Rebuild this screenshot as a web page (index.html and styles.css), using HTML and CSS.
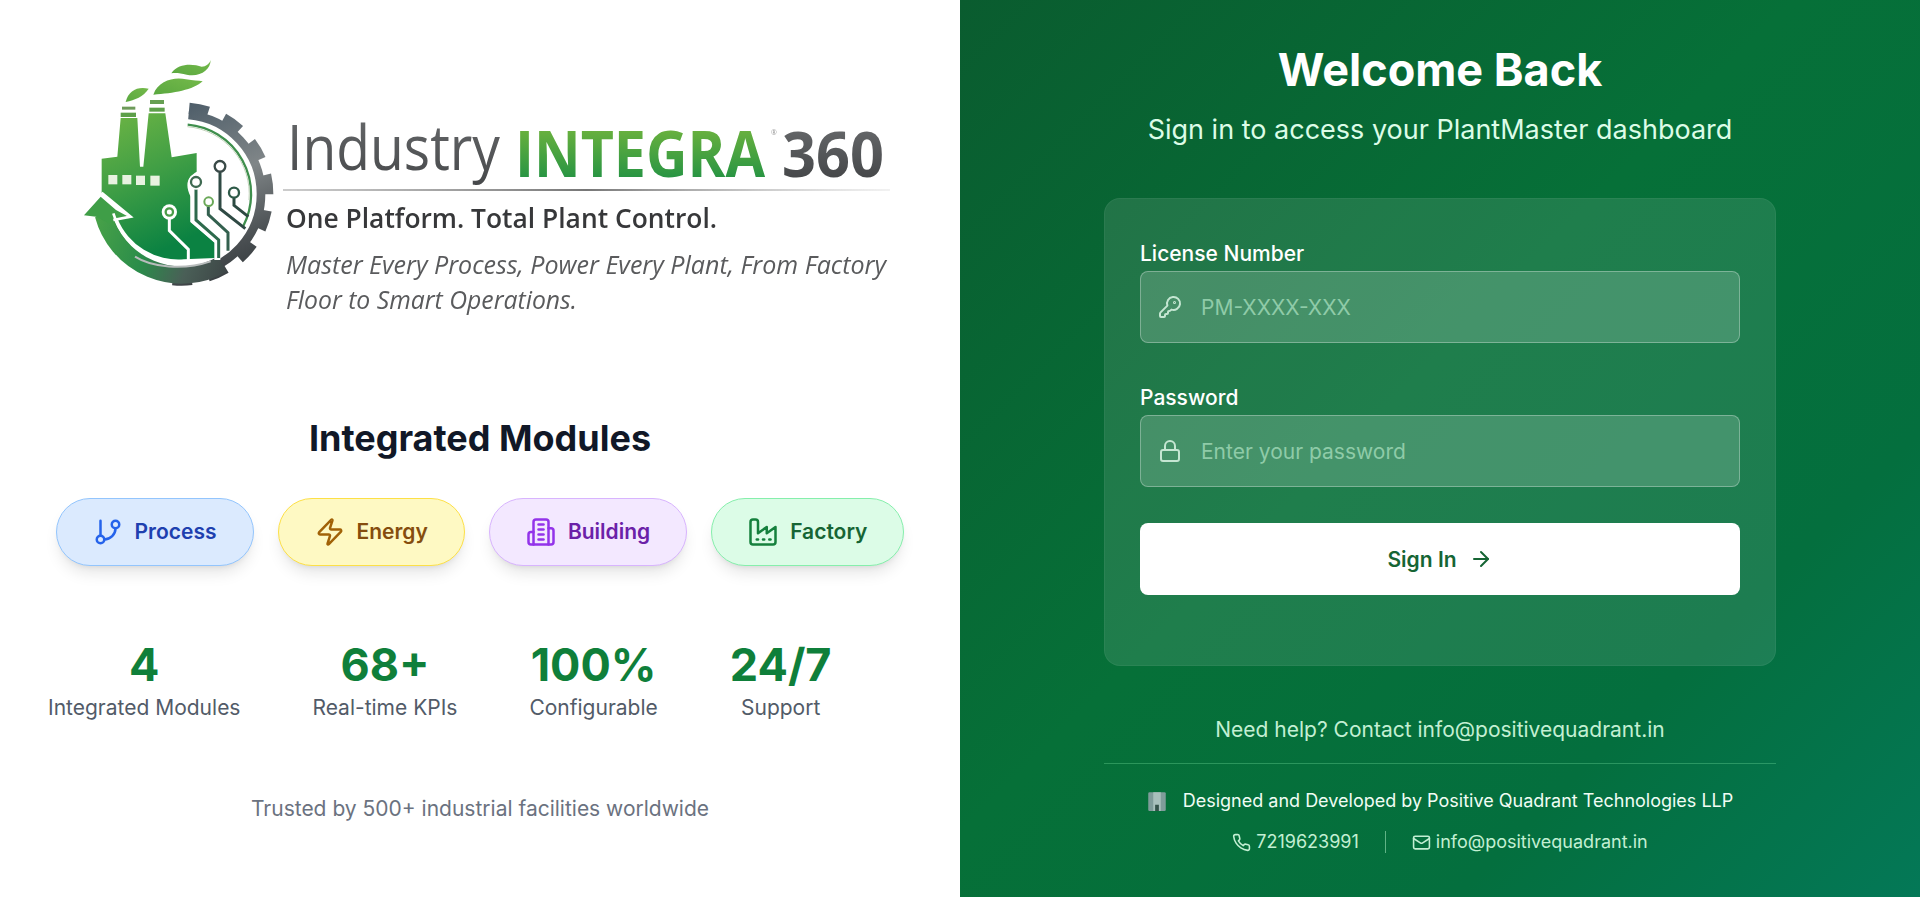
FILE: index.html
```html
<!DOCTYPE html>
<html lang="en">
<head>
<meta charset="utf-8">
<title>Industry INTEGRA 360</title>
<link rel="stylesheet" href="styles.css">
</head>
<body>
<main class="page">
  <section class="left">
    <svg class="logo" viewBox="48 40 864 300" width="864" height="300" role="img" aria-label="Industry INTEGRA 360 logo">
      <defs>
        <linearGradient id="gBody" x1="0" y1="0" x2="0.35" y2="1">
          <stop offset="0" stop-color="#6fb544"/><stop offset=".5" stop-color="#3f9e45"/><stop offset="1" stop-color="#0b8242"/>
        </linearGradient>
        <linearGradient id="gLeaf" x1="0" y1="1" x2="1" y2="0">
          <stop offset="0" stop-color="#5aa840"/><stop offset="1" stop-color="#74b94a"/>
        </linearGradient>
        <linearGradient id="gGear" gradientUnits="userSpaceOnUse" x1="340" y1="200" x2="560" y2="720">
          <stop offset="0" stop-color="#4c5c68"/><stop offset=".45" stop-color="#808688"/><stop offset=".8" stop-color="#4a4f52"/><stop offset="1" stop-color="#33393c"/>
        </linearGradient>
        <linearGradient id="gArc" gradientUnits="userSpaceOnUse" x1="100" y1="520" x2="540" y2="690">
          <stop offset="0" stop-color="#4aa348"/><stop offset=".4" stop-color="#2a8c4a"/><stop offset=".68" stop-color="#4a5f57"/><stop offset="1" stop-color="#3a3f42"/>
        </linearGradient>
        <linearGradient id="gInt" x1="0" y1="0" x2="0" y2="1">
          <stop offset="0" stop-color="#86bd3c"/><stop offset="1" stop-color="#0f8a45"/>
        </linearGradient>
        <linearGradient id="gNum" x1="0" y1="0" x2="0" y2="1">
          <stop offset="0" stop-color="#6f7173"/><stop offset="1" stop-color="#3b3d3f"/>
        </linearGradient>
        <linearGradient id="gInd" x1="0" y1="0" x2="0" y2="1">
          <stop offset="0" stop-color="#6a6c6e"/><stop offset="1" stop-color="#454749"/>
        </linearGradient>
        <linearGradient id="gRule" x1="0" y1="0" x2="1" y2="0">
          <stop offset="0" stop-color="#999" stop-opacity=".5"/><stop offset=".5" stop-color="#777"/><stop offset="1" stop-color="#bbb" stop-opacity=".2"/>
        </linearGradient>
      </defs>
      <g transform="translate(60 40) scale(.33333)">
        <!-- gear -->
        <path d="M385.7 224.9 A238 238 0 0 1 385.7 699.1" fill="none" stroke="url(#gGear)" stroke-width="26"/>
        <path d="M387.5 205 A258 258 0 1 1 338 718.6" fill="none" stroke="url(#gGear)" stroke-width="34" pathLength="181" stroke-dasharray="13 11"/>
        <!-- arrow arc -->
        <path d="M486.5 672.4 A243 243 0 0 1 130.3 524.9" fill="none" stroke="url(#gArc)" stroke-width="52"/>
        <polygon points="122,470 72,526 108,530 166,560 158,540 212,534 168,510" fill="#3f9e47"/>
        <path d="M465 646 A213 213 0 0 1 160 520" fill="none" stroke="#fff" stroke-width="8"/>
        <path d="M225 650 C275 682 370 692 452 664" fill="none" stroke="#b8bcbc" stroke-width="6"/>
        <!-- inner thin arc -->
        <path d="M383 254 A209 209 0 0 1 550 558" fill="none" stroke="#3f8f4d" stroke-width="7"/>
        <path d="M382 260 A203 203 0 0 1 567 480" fill="none" stroke="#c4d4bc" stroke-width="3"/>
        <!-- factory -->
        <path d="M125 356 L172 350 L182 234 H232 L240 380 H250 L266 220 H316 L335 352 L410 339 L410 395 C385 410 372 430 392 470 V545 L465 608 V654 L372 658 A197 197 0 0 1 172 535 L212 534 L125 458 Z" fill="url(#gBody)"/>
        <rect x="186" y="200" width="40" height="9" fill="#6e9b5a"/>
        <rect x="182" y="218" width="46" height="13" fill="#5d9f49"/>
        <rect x="270" y="180" width="42" height="12" fill="#669f52"/>
        <rect x="268" y="203" width="46" height="12" fill="#5d9f49"/>
        <g fill="#e8f2e0">
          <rect x="145" y="405" width="27" height="28"/><rect x="187" y="405" width="27" height="28"/>
          <rect x="228" y="407" width="27" height="28"/><rect x="271" y="407" width="28" height="30"/>
        </g>
        <path d="M125 458 L212 530 L160 540" fill="none" stroke="#fff" stroke-width="8"/>
        <!-- circuit -->
        <g fill="none">
          <path d="M328 530 V572 L385 628 V660" stroke="#fff" stroke-width="9"/>
          <path d="M400 440 V542 L472 604 V660" stroke="#fff" stroke-width="18"/>
          <path d="M408 442 V540 L476 600 V654" stroke="#2d6a4c" stroke-width="9"/>
          <path d="M445 500 V524 L504 578 V632" stroke="#33604e" stroke-width="9"/>
          <path d="M480 395 V506 L556 566" stroke="#2f4a44" stroke-width="9"/>
          <path d="M522 474 V496 L565 530" stroke="#2d4a42" stroke-width="9"/>
        </g>
        <circle cx="328" cy="516" r="23" fill="#fff"/>
        <circle cx="328" cy="516" r="11" fill="#fff" stroke="#4a9c48" stroke-width="7"/>
        <circle cx="408" cy="426" r="23" fill="#fff"/>
        <circle cx="408" cy="426" r="15" fill="#fff" stroke="#3f6a52" stroke-width="7"/>
        <circle cx="446" cy="485" r="13" fill="#fff" stroke="#6aa858" stroke-width="6"/>
        <circle cx="480" cy="379" r="16" fill="#fff" stroke="#3a4a48" stroke-width="7"/>
        <circle cx="522" cy="458" r="15" fill="#fff" stroke="#2e5a48" stroke-width="7"/>
        <!-- smoke leaves -->
        <path d="M197 186 C205 150 235 138 266 146 C250 170 225 180 197 186 Z" fill="url(#gLeaf)"/>
        <path d="M280 164 C295 120 345 110 378 118 C400 122 415 122 428 124 C400 150 340 160 280 164 Z" fill="url(#gLeaf)"/>
        <path d="M334 100 C355 68 400 72 425 80 C438 80 448 72 452 60 C452 90 420 112 380 104 C362 100 348 98 334 100 Z" fill="url(#gLeaf)"/>
      </g>
      <text class="l-ind" x="287" y="170" textLength="213" lengthAdjust="spacingAndGlyphs" fill="url(#gInd)">Industry</text>
      <text class="l-big" x="515" y="177" textLength="250" lengthAdjust="spacingAndGlyphs" fill="url(#gInt)">INTEGRA</text>
      <text class="l-reg" x="771" y="135">®</text>
      <text class="l-num" x="782" y="177" textLength="102" lengthAdjust="spacingAndGlyphs" fill="url(#gNum)">360</text>
      <rect x="283" y="189" width="607" height="2" fill="url(#gRule)"/>
      <text class="l-tag" x="286" y="228" textLength="431" lengthAdjust="spacingAndGlyphs">One Platform. Total Plant Control.</text>
      <text class="l-sub" x="286" y="274" textLength="600" lengthAdjust="spacingAndGlyphs">Master Every Process, Power Every Plant, From Factory</text>
      <text class="l-sub" x="286" y="309" textLength="291" lengthAdjust="spacingAndGlyphs">Floor to Smart Operations.</text>
    </svg>

    <h2 class="modules-title">Integrated Modules</h2>

    <div class="pills">
      <div class="pill pill-blue">
        <svg class="pill-icon" viewBox="0 0 24 24"><path d="M6 3v12"/><circle cx="18" cy="6" r="3"/><circle cx="6" cy="18" r="3"/><path d="M18 9a9 9 0 0 1-9 9"/></svg>
        <span class="pill-text">Process</span>
      </div>
      <div class="pill pill-yellow">
        <svg class="pill-icon" viewBox="0 0 24 24"><path d="M4 14a1 1 0 0 1-.78-1.63l9.9-10.2a.5.5 0 0 1 .86.46l-1.92 6.02A1 1 0 0 0 13 10h7a1 1 0 0 1 .78 1.63l-9.9 10.2a.5.5 0 0 1-.86-.46l1.92-6.02A1 1 0 0 0 11 14z"/></svg>
        <span class="pill-text">Energy</span>
      </div>
      <div class="pill pill-purple">
        <svg class="pill-icon" viewBox="0 0 24 24"><path d="M6 22V4a2 2 0 0 1 2-2h8a2 2 0 0 1 2 2v18Z"/><path d="M6 12H4a2 2 0 0 0-2 2v6a2 2 0 0 0 2 2h2"/><path d="M18 9h2a2 2 0 0 1 2 2v9a2 2 0 0 1-2 2h-2"/><path d="M10 6h4"/><path d="M10 10h4"/><path d="M10 14h4"/><path d="M10 18h4"/></svg>
        <span class="pill-text">Building</span>
      </div>
      <div class="pill pill-green">
        <svg class="pill-icon" viewBox="0 0 24 24"><path d="M2 20a2 2 0 0 0 2 2h16a2 2 0 0 0 2-2V8l-7 5V8l-7 5V4a2 2 0 0 0-2-2H4a2 2 0 0 0-2 2Z"/><path d="M17 18h1"/><path d="M12 18h1"/><path d="M7 18h1"/></svg>
        <span class="pill-text">Factory</span>
      </div>
    </div>

    <div class="stats">
      <div class="stat"><div class="stat-num">4</div><div class="stat-label">Integrated Modules</div></div>
      <div class="stat"><div class="stat-num">68+</div><div class="stat-label">Real-time KPIs</div></div>
      <div class="stat"><div class="stat-num">100%</div><div class="stat-label">Configurable</div></div>
      <div class="stat"><div class="stat-num">24/7</div><div class="stat-label">Support</div></div>
    </div>

    <p class="trusted">Trusted by 500+ industrial facilities worldwide</p>
  </section>

  <section class="right">
    <h1 class="welcome">Welcome Back</h1>
    <p class="subtitle">Sign in to access your PlantMaster dashboard</p>

    <form class="card">
      <label class="field-label" for="lic">License Number</label>
      <div class="field">
        <svg class="field-icon" viewBox="0 0 24 24"><path d="M2.586 17.414A2 2 0 0 0 2 18.828V21a1 1 0 0 0 1 1h3a1 1 0 0 0 1-1v-1a1 1 0 0 1 1-1h1a1 1 0 0 0 1-1v-1a1 1 0 0 1 1-1h.172a2 2 0 0 0 1.414-.586l.814-.814a6.5 6.5 0 1 0-4-4z"/><circle cx="16.5" cy="7.5" r=".5"/></svg>
        <input id="lic" class="field-input" type="text" placeholder="PM-XXXX-XXX">
      </div>
      <label class="field-label field-label-2" for="pw">Password</label>
      <div class="field">
        <svg class="field-icon" viewBox="0 0 24 24"><rect x="3" y="11" width="18" height="11" rx="2"/><path d="M7 11V7a5 5 0 0 1 10 0v4"/></svg>
        <input id="pw" class="field-input" type="password" placeholder="Enter your password">
      </div>
      <button class="signin" type="button">
        <span>Sign In</span>
        <svg class="signin-icon" viewBox="0 0 24 24"><path d="M5 12h14"/><path d="m12 5 7 7-7 7"/></svg>
      </button>
    </form>

    <p class="help">Need help? Contact info@positivequadrant.in</p>
    <div class="divider"></div>
    <p class="credit">
      <svg class="credit-icon" viewBox="0 0 16 16"><rect x="1" y="1" width="14" height="15" rx="1" fill="#7f9c9a"/><rect x="5" y="1" width="6" height="15" fill="#a9c0bc"/><rect x="6.5" y="11" width="3" height="5" fill="#35524a"/></svg>
      <span>Designed and Developed by Positive Quadrant Technologies LLP</span>
    </p>
    <div class="contact">
      <span class="contact-item">
        <svg class="contact-icon" viewBox="0 0 24 24"><path d="M22 16.92v3a2 2 0 0 1-2.18 2 19.79 19.79 0 0 1-8.63-3.07 19.5 19.5 0 0 1-6-6 19.79 19.79 0 0 1-3.07-8.67A2 2 0 0 1 4.11 2h3a2 2 0 0 1 2 1.72 12.84 12.84 0 0 0 .7 2.81 2 2 0 0 1-.45 2.11L8.09 9.91a16 16 0 0 0 6 6l1.27-1.27a2 2 0 0 1 2.11-.45 12.84 12.84 0 0 0 2.81.7A2 2 0 0 1 22 16.92z"/></svg>
        7219623991
      </span>
      <span class="contact-sep"></span>
      <span class="contact-item">
        <svg class="contact-icon" viewBox="0 0 24 24"><rect x="2" y="4" width="20" height="16" rx="2"/><path d="m22 7-8.97 5.7a1.94 1.94 0 0 1-2.06 0L2 7"/></svg>
        info@positivequadrant.in
      </span>
    </div>
  </section>
</main>
</body>
</html>
```

FILE: styles.css
```css
* { box-sizing: border-box; }
html, body { margin: 0; padding: 0; height: 100%; overflow: hidden; }
body { font-family: Inter, "Liberation Sans", sans-serif; background: #fff; }
h1, h2, p { margin: 0; }

.page { display: flex; height: 897px; }

.left { width: 960px; background: #fff; display: flex; flex-direction: column; padding-top: 40px; }
.logo { display: block; margin-left: 48px; filter: blur(.35px); }
.l-ind { font: 400 62px "Open Sans", sans-serif; }
.l-big { font: 700 65px "Open Sans", sans-serif; }
.l-num { font: 700 62px "Open Sans", sans-serif; }
.l-reg { font: 400 7px "Open Sans", sans-serif; fill: #999; }
.l-tag { font: 600 27px "Open Sans", sans-serif; fill: #37383a; }
.l-sub { font: italic 400 26px "Open Sans", sans-serif; fill: #5a5b5d; }

.modules-title { margin-top: 78px; text-align: center; font-size: 36px; line-height: 40px; font-weight: 700; color: #111827; }

.pills { margin-top: 40px; display: flex; justify-content: center; gap: 24px; }
.pill { height: 68px; padding: 0 36px; display: flex; align-items: center; gap: 12px; border-radius: 34px; border: 1px solid; font-size: 21px; font-weight: 600; box-shadow: 0 10px 15px -3px rgba(0,0,0,.1), 0 4px 6px -4px rgba(0,0,0,.1); }
.pill-text { margin-top: -2px; }
.pill-icon { width: 30px; height: 30px; fill: none; stroke: currentColor; stroke-width: 2; stroke-linecap: round; stroke-linejoin: round; flex: none; }
.pill-blue { background: #dbeafe; border-color: #93c5fd; color: #1e40af; }
.pill-blue .pill-icon { color: #2563eb; }
.pill-yellow { background: #fef9c3; border-color: #fde047; color: #854d0e; }
.pill-yellow .pill-icon { color: #a16207; }
.pill-purple { background: #f3e8ff; border-color: #d8b4fe; color: #6b21a8; }
.pill-purple .pill-icon { color: #9333ea; }
.pill-green { background: #dcfce7; border-color: #86efac; color: #166534; }
.pill-green .pill-icon { color: #15803d; }

.stats { margin-top: 75px; padding-left: 48px; display: flex; gap: 72px; }
.stat { text-align: center; }
.stat-num { font-size: 45px; line-height: 48px; font-weight: 700; color: #0f7f3a; }
.stat-label { margin-top: 5px; font-size: 21px; line-height: 28px; color: #525b68; white-space: nowrap; }

.trusted { margin-top: 73px; text-align: center; font-size: 21px; line-height: 28px; color: #6b7280; }

.right { width: 960px; background: linear-gradient(135deg, #0a5c2f 0%, #067038 45%, #046f3e 75%, #047857 100%); display: flex; flex-direction: column; align-items: center; padding-top: 46px; }
.welcome { font-size: 45px; line-height: 48px; font-weight: 700; color: #fff; }
.subtitle { margin-top: 20px; font-size: 27px; line-height: 32px; color: #dcfce7; }

.card { margin-top: 52px; width: 672px; height: 468px; padding: 41px 35px 0; background: rgba(255,255,255,.1); border: 1px solid rgba(255,255,255,.05); border-radius: 16px; }
.field-label { display: block; font-size: 21px; line-height: 28px; font-weight: 500; color: #fff; }
.field-label-2 { margin-top: 41px; }
.field { margin-top: 3px; height: 72px; padding-left: 17px; display: flex; align-items: center; gap: 19px; background: rgba(255,255,255,.17); border: 1px solid rgba(255,255,255,.3); border-radius: 8px; }
.field-icon { width: 24px; height: 24px; fill: none; stroke: #c5e6d2; stroke-width: 2; stroke-linecap: round; stroke-linejoin: round; flex: none; }
.field-input { flex: 1; min-width: 0; background: transparent; border: 0; outline: 0; padding: 0; font: 400 21px Inter, sans-serif; color: #fff; }
.field-input::placeholder { color: #8fcba8; opacity: 1; }

.signin { margin-top: 36px; width: 100%; height: 72px; display: flex; align-items: center; justify-content: center; gap: 12px; background: #fff; border: 0; border-radius: 8px; font: 600 21px Inter, sans-serif; color: #166534; }
.signin-icon { width: 24px; height: 24px; fill: none; stroke: currentColor; stroke-width: 2; stroke-linecap: round; stroke-linejoin: round; }

.help { margin-top: 50px; font-size: 21px; line-height: 28px; color: #c3efd3; }
.divider { margin-top: 19px; width: 672px; height: 1px; background: rgba(134,239,172,.3); }
.credit { margin-top: 23px; display: flex; align-items: center; gap: 16px; font-size: 18px; line-height: 28px; color: #f0fdf4; }
.credit-icon { width: 20px; height: 20px; flex: none; }
.contact { margin-top: 13px; display: flex; align-items: center; gap: 26px; font-size: 18px; line-height: 28px; color: #c3efd3; }
.contact-item { display: flex; align-items: center; gap: 5px; }
.contact-icon { width: 19px; height: 19px; fill: none; stroke: currentColor; stroke-width: 2; stroke-linecap: round; stroke-linejoin: round; }
.contact-sep { width: 1px; height: 22px; background: rgba(187,247,208,.5); }
```
